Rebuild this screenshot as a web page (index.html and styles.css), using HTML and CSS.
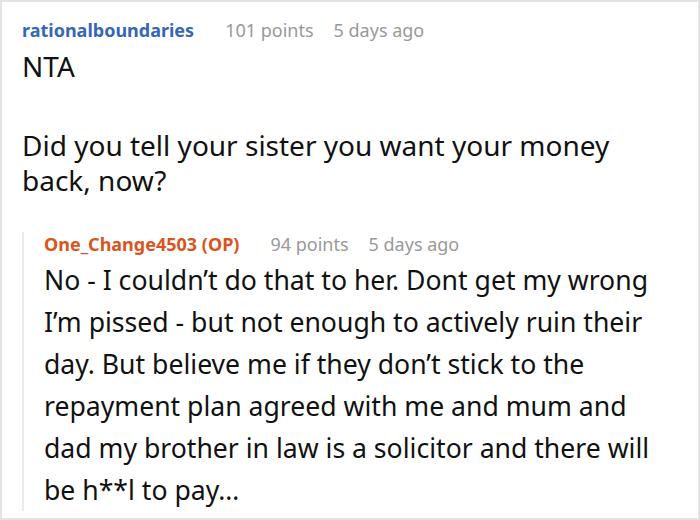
FILE: index.html
```html
<!DOCTYPE html>
<html>
<head>
<meta charset="utf-8">
<link rel="stylesheet" href="styles.css">
</head>
<body>
<div class="frame">
  <div class="comment">
    <div class="meta">
      <span class="user">rationalboundaries</span>
      <span class="info">101 points</span>
      <span class="info">5 days ago</span>
    </div>
    <div class="body top-body">
      <p>NTA</p>
      <p>Did you tell your sister you want your money back, now?</p>
    </div>
    <div class="reply">
      <div class="meta reply-meta">
        <span class="user op">One_Change4503 (OP)</span>
        <span class="info">94 points</span>
        <span class="info">5 days ago</span>
      </div>
      <div class="body reply-body">
        <p>No - I couldn’t do that to her. Dont get my wrong I’m pissed - but not enough to actively ruin their day. But believe me if they don’t stick to the repayment plan agreed with me and mum and dad my brother in law is a solicitor and there will be h**l to pay…</p>
      </div>
    </div>
  </div>
</div>
</body>
</html>
```
FILE: styles.css
```css
html, body {
  margin: 0;
  padding: 0;
  background: #fff;
}
.frame {
  width: 700px;
  height: 520px;
  box-sizing: border-box;
  border: 2px solid #e4e4e4;
  overflow: hidden;
  font-family: "Noto Sans", "Open Sans", sans-serif;
  color: #111;
}
.comment {
  padding: 16px 20px 0 20px;
}
.meta {
  display: flex;
  gap: 20px;
  font-size: 18px;
  line-height: 24px;
}
.user {
  font-weight: bold;
  color: #3567b6;
  margin-right: 11px;
}
.user.op {
  color: #d9541e;
}
.info {
  color: #999;
}
.body p {
  margin: 0;
}
.top-body {
  font-size: 28px;
  line-height: 35px;
  margin-top: 7px;
}
.top-body p + p {
  margin-top: 44px;
}
.reply {
  margin-top: 45px;
  border-left: 2px solid #ececec;
  padding-left: 20px;
}
.reply-meta {
  margin-top: -11px;
}
.reply-body {
  font-size: 26.6px;
  line-height: 42px;
  margin-top: 3px;
  margin-bottom: -14px;
}
```
